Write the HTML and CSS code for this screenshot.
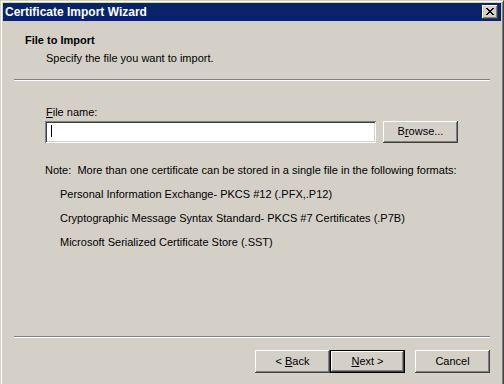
FILE: index.html
```html
<!DOCTYPE html>
<html>
<head>
    <meta charset="utf-8"/>
    <title>Certificate Import Wizard</title>
    <link rel="stylesheet" href="styles.css">
</head>
<body>
<div class="window">
    <!--title bar-->
    <div class="titlebar">
        <span class="title">Certificate Import Wizard</span>
        <span class="closeBtn">
            <svg width="8" height="7" viewBox="0 0 8 7">
                <path fill="#000" d="M0 0h2v1H0zM6 0h2v1H6zM1 1h2v1H1zM5 1h2v1H5zM2 2h4v1H2zM3 3h2v1H3zM2 4h4v1H2zM1 5h2v1H1zM5 5h2v1H5zM0 6h2v1H0zM6 6h2v1H6z"/>
            </svg>
        </span>
    </div>

    <!--page header-->
    <div class="pageHeader">
        <div class="pageTitle">File to Import</div>
        <div class="pageSub">Specify the file you want to import.</div>
    </div>
    <div class="separator"></div>

    <!--page body-->
    <div class="pageBody">
        <div class="fieldLabel"><u>F</u>ile name:</div>
        <div class="fileRow">
            <div class="textBox"><span class="caret"></span></div>
            <div class="winBtn"><span>B<u>r</u>owse...</span></div>
        </div>
        <div class="note">Note:&nbsp; More than one certificate can be stored in a single file in the following formats:</div>
        <ul class="formatList">
            <li>Personal Information Exchange- PKCS #12 (.PFX,.P12)</li>
            <li>Cryptographic Message Syntax Standard- PKCS #7 Certificates (.P7B)</li>
            <li>Microsoft Serialized Certificate Store (.SST)</li>
        </ul>
    </div>
    <div class="separator"></div>

    <!--buttons-->
    <div class="pageFooter">
        <div class="winBtn"><span>&lt; <u>B</u>ack</span></div>
        <div class="winBtn defaultBtn"><span><u>N</u>ext &gt;</span></div>
        <div class="winBtn cancelBtn"><span>Cancel</span></div>
    </div>
</div>
</body>
</html>
```

FILE: styles.css
```css
body {
    margin: 0;
    background: #d4d0c8;
    font-family: "Liberation Sans", Arial, sans-serif;
    font-size: 11px;
    color: #000;
    overflow: hidden;
}

.window {
    width: 504px;
    height: 400px;
    box-sizing: border-box;
    padding: 2px;
    border: 1px solid;
    border-color: #d4d0c8 #404040 #404040 #d4d0c8;
    box-shadow: inset 1px 1px #fff, inset -1px -1px #808080;
    background: #d4d0c8;
    display: flex;
    flex-direction: column;
}

.titlebar {
    height: 18px;
    background: #0a246a;
    display: flex;
    align-items: center;
    justify-content: space-between;
    padding-left: 2px;
}

.title {
    color: #fff;
    font-weight: bold;
    font-size: 12px;
    line-height: 18px;
}

.closeBtn {
    width: 16px;
    height: 14px;
    margin-right: 3px;
    box-sizing: border-box;
    background: #d4d0c8;
    box-shadow: inset -1px -1px #404040, inset 1px 1px #fff, inset -2px -2px #808080;
    display: flex;
    align-items: center;
    justify-content: center;
    padding: 0 1px 1px 0;
}

.closeBtn svg {
    display: block;
}

.pageHeader {
    padding: 13px 0 0 22px;
    line-height: 13px;
}

.pageTitle {
    font-weight: bold;
}

.pageSub {
    margin: 5px 0 0 21px;
}

.separator {
    height: 0;
    margin: 14px 11px 0 11px;
    border-top: 1px solid #808080;
    border-bottom: 1px solid #fff;
}

.pageBody {
    flex: 1;
    padding: 25px 0 0 42px;
    line-height: 13px;
}

.pageBody + .separator {
    margin-top: 0;
}

.fieldLabel {
    margin-left: 1px;
}

.fileRow {
    display: flex;
    gap: 7px;
    margin-top: 2px;
}

.textBox {
    width: 331px;
    height: 22px;
    box-sizing: border-box;
    background: #fff;
    box-shadow: inset 1px 1px #808080, inset -1px -1px #fff, inset 2px 2px #404040, inset -2px -2px #d4d0c8;
    padding: 4px 0 0 6px;
}

.caret {
    display: block;
    width: 1px;
    height: 12px;
    background: #000;
}

.winBtn {
    width: 75px;
    height: 22px;
    box-sizing: border-box;
    background: #d4d0c8;
    box-shadow: inset -1px -1px #404040, inset 1px 1px #fff, inset -2px -2px #808080;
    display: flex;
    align-items: center;
    justify-content: center;
    padding-bottom: 1px;
    white-space: pre;
}

.note {
    margin-top: 21px;
}

.formatList {
    list-style: none;
    margin: 0;
    padding: 0 0 0 15px;
}

.formatList li {
    margin-top: 11px;
}

.pageFooter {
    height: 59px;
    box-sizing: border-box;
    display: flex;
    justify-content: flex-end;
    align-items: flex-start;
    padding: 12px 11px 0 0;
}

.pageFooter .winBtn {
    height: 23px;
}

.defaultBtn {
    border: 1px solid #000;
}

.cancelBtn {
    margin-left: 10px;
}
```
